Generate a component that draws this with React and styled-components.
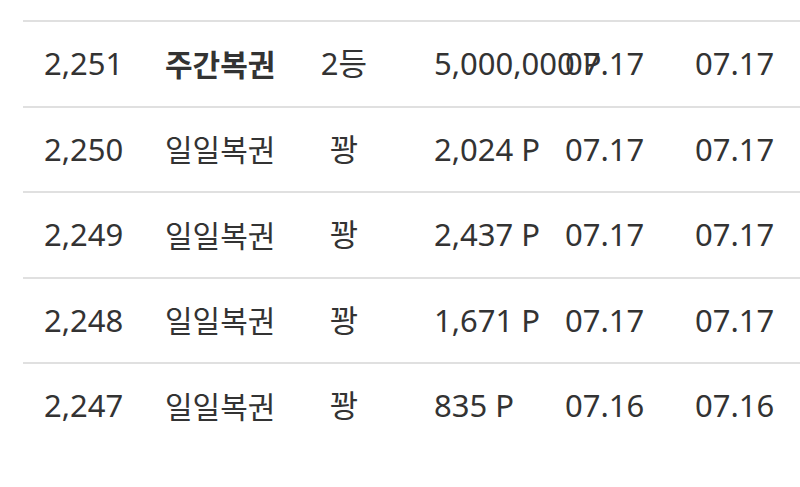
import React from 'react';
import styled, { createGlobalStyle } from 'styled-components';

const GlobalStyle = createGlobalStyle`
  html, body {
    margin: 0;
    padding: 0;
    background: #ffffff;
  }
  body {
    font-family: "Noto Sans", "Noto Sans CJK KR", sans-serif;
    color: #333333;
    overflow: hidden;
  }
`;

const Wrapper = styled.div`
  width: 800px;
  height: 487px;
  padding-top: 20px;
  padding-left: 23px;
  box-sizing: border-box;
`;

const Row = styled.div`
  display: grid;
  grid-template-columns: 121px 134px 90px 176px 130px 1fr;
  align-items: center;
  height: 83.5px;
  padding-left: 21px;
  border-top: 2px solid #e0e0e0;
  font-size: 31px;
  line-height: 1;
  white-space: nowrap;
`;

const Cell = styled.div`
  text-align: ${p => (p.$center ? 'center' : 'left')};
  padding-left: ${p => p.$indent || 0}px;
  font-weight: ${p => (p.$bold ? 700 : 400)};
  overflow: visible;
`;

const Kor = styled.span`
  font-family: "Noto Sans CJK KR", sans-serif;
  font-size: 30px;
`;

const rows = [
  { no: '2,251', kind: '주간복권', bold: true, rank: '2등', prize: '5,000,000 P', date: '07.17', paid: '07.17' },
  { no: '2,250', kind: '일일복권', rank: '꽝', prize: '2,024 P', date: '07.17', paid: '07.17' },
  { no: '2,249', kind: '일일복권', rank: '꽝', prize: '2,437 P', date: '07.17', paid: '07.17' },
  { no: '2,248', kind: '일일복권', rank: '꽝', prize: '1,671 P', date: '07.17', paid: '07.17' },
  { no: '2,247', kind: '일일복권', rank: '꽝', prize: '835 P', date: '07.16', paid: '07.16' },
];

export default function App() {
  return (
    <>
      <GlobalStyle />
      <Wrapper>
        {rows.map((r) => (
          <Row key={r.no}>
            <Cell>{r.no}</Cell>
            <Cell $bold={r.bold}><Kor>{r.kind}</Kor></Cell>
            <Cell $center>{r.rank}</Cell>
            <Cell $indent={45}>{r.prize}</Cell>
            <Cell>{r.date}</Cell>
            <Cell>{r.paid}</Cell>
          </Row>
        ))}
      </Wrapper>
    </>
  );
}
